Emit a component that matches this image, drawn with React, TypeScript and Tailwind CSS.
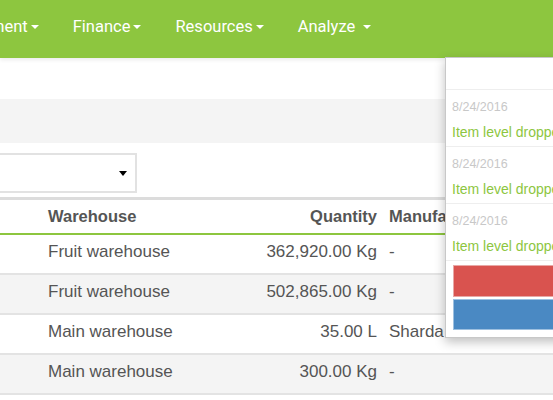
const navItems = ["ment", "Finance", "Resources", "Analyze"]

const rows = [
  { warehouse: "Fruit warehouse", quantity: "362,920.00 Kg", maker: "-" },
  { warehouse: "Fruit warehouse", quantity: "502,865.00 Kg", maker: "-" },
  { warehouse: "Main warehouse", quantity: "35.00 L", maker: "Sharda" },
  { warehouse: "Main warehouse", quantity: "300.00 Kg", maker: "-" },
]

const notes = [
  { date: "8/24/2016", text: "Item level dropped below minimum" },
  { date: "8/24/2016", text: "Item level dropped below minimum" },
  { date: "8/24/2016", text: "Item level dropped below minimum" },
]

function Caret() {
  return <span className="ml-[3px] inline-block h-0 w-0 border-x-[4px] border-t-[4px] border-x-transparent border-t-white align-middle" />
}

const App = () => {
  return (
    <div className="relative h-[400px] w-[553px] overflow-hidden bg-white font-['Liberation_Sans',Arial,sans-serif]">
      {/* Top navigation */}
      <div className="relative z-10 flex h-[58px] items-center gap-[34px] bg-[#8dc63f] pb-[4px] font-['Roboto',sans-serif] text-[16.5px] text-white shadow-[0_2px_4px_rgba(0,0,0,0.08)]">
        {navItems.map((label, i) => (
          <span key={label} className={i === 0 ? "-ml-[10px]" : ""}>
            {label}
            {label === "Analyze" && <span className="inline-block w-[5px]" />}
            <Caret />
          </span>
        ))}
      </div>

      {/* Page header area */}
      <div className="h-[41px] bg-white" />
      <div className="h-[44px] bg-[#f4f4f4]" />

      {/* Filter */}
      <div className="flex h-[54px] items-start pt-[10px]">
        <div className="-ml-[2px] flex h-[40px] w-[139px] items-center justify-end border-2 border-[#e2e2e2] bg-white pr-[8px]">
          <span className="inline-block h-0 w-0 border-x-[4px] border-t-[5px] border-x-transparent border-t-black" />
        </div>
      </div>

      {/* Table */}
      <div className="border-t-[3px] border-[#dcdcdc] text-[17px] text-[#555]">
        <div className="grid h-[35px] grid-cols-[40px_160px_185px_1fr] items-center border-b-[2px] border-[#8dc63f] text-[16.5px] font-bold">
          <div />
          <div className="pl-2">Warehouse</div>
          <div className="pr-2 text-right">Quantity</div>
          <div className="whitespace-nowrap pl-1">Manufacturer</div>
        </div>
        {rows.map((r, i) => (
          <div
            key={i}
            className={`grid h-[40px] grid-cols-[40px_160px_185px_1fr] items-center border-b-2 border-[#e3e3e3] pb-[4px] ${i % 2 === 1 ? "bg-[#f4f4f4]" : "bg-white"}`}
          >
            <div />
            <div className="pl-2">{r.warehouse}</div>
            <div className="pr-2 text-right">{r.quantity}</div>
            <div className="whitespace-nowrap pl-1">{r.maker}</div>
          </div>
        ))}
      </div>

      {/* Notifications dropdown */}
      <div className="absolute left-[445px] top-[57px] z-20 w-[220px] border border-[#c8c8c8] bg-white shadow-[0_4px_10px_rgba(0,0,0,0.25)]">
        <div className="h-[32px] border-b border-[#eee]" />
        {notes.map((n, i) => (
          <div key={i} className="h-[57px] overflow-hidden border-b border-[#eee] pl-[6px] pt-[9px]">
            <div className="text-[12.5px] leading-[16px] text-[#c8c8c8]">{n.date}</div>
            <div className="mt-[9px] whitespace-nowrap text-[14px] leading-[17px] text-[#8dc63f]">{n.text}</div>
          </div>
        ))}
        <div className="flex flex-col gap-[2px] px-[7px] pb-[7px] pt-[4px]">
          <div className="h-[32px] border border-[#e8a8a6] bg-[#d9534f]" />
          <div className="h-[31px] border border-[#9dc0e0] bg-[#4a89c3]" />
        </div>
      </div>
    </div>
  )
}

export default App
